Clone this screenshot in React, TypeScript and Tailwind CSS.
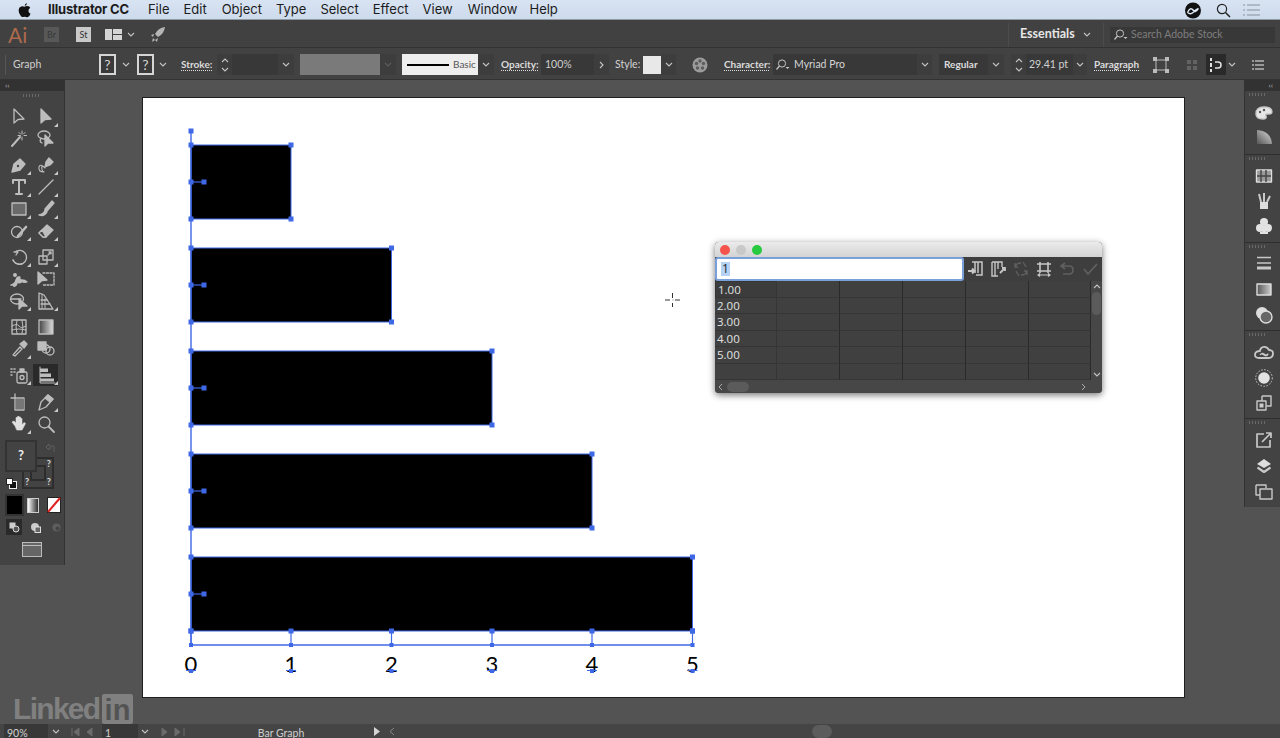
import React from "react";

const c = "#bdbdbd";
const Chev = ({ dim = false, up = false }: { dim?: boolean; up?: boolean }) => (
  <svg width="8" height="5" viewBox="0 0 8 5" className="shrink-0">
    <path d={up ? "M1 4 L4 1 L7 4" : "M1 1 L4 4 L7 1"} fill="none" stroke={dim ? "#5e5e5e" : "#c4c4c4"} strokeWidth="1.1" />
  </svg>
);

const ChevCell = ({ w = "w-[16px]", dim = false }: { w?: string; dim?: boolean }) => (
  <span className={`${w} h-[21px] flex items-center justify-center bg-[#3d3d3d]`}>
    <Chev dim={dim} />
  </span>
);

const Spin = () => (
  <span className="w-[15px] h-[21px] flex flex-col items-center justify-center gap-[4px] bg-[#3d3d3d]">
    <Chev up />
    <Chev />
  </span>
);

const Lens = () => (
  <svg width="15" height="12" viewBox="0 0 15 12" className="shrink-0">
    <circle cx="7" cy="4.5" r="3.6" fill="none" stroke="#c4c4c4" />
    <path d="M4.5 7 L1.5 10.5" stroke="#c4c4c4" strokeWidth="1.2" />
    <path d="M10.5 8 h4 l-2 2 z" fill="#c4c4c4" />
  </svg>
);

const Q = () => (
  <span className="w-[17px] h-[21px] border-2 border-[#d5d5d5] flex items-center justify-center text-[#d5d5d5] text-[14px] leading-none bg-[#3a3a3a]">?</span>
);

const Label = ({ children, className = "" }: { children: React.ReactNode; className?: string }) => (
  <span className={`text-[#dcdcdc] text-[10px] font-bold underline decoration-dotted underline-offset-2 ${className}`}>{children}</span>
);

function Tool({ children, corner = true, active = false }: { children?: React.ReactNode; corner?: boolean; active?: boolean }) {
  return (
    <div className={`relative w-[25px] h-[22px] flex items-center justify-center ${active ? "bg-[#2a2a2a]" : ""}`}>
      <svg width="20" height="20" viewBox="0 0 20 20" fill="none" stroke={c} strokeWidth="1.3" strokeLinejoin="round" strokeLinecap="round">
        {children}
      </svg>
      {corner && (
        <svg width="4" height="4" viewBox="0 0 4 4" className="absolute right-[0px] bottom-[1px]">
          <path d="M4 0 V4 H0 Z" fill="#c8c8c8" />
        </svg>
      )}
    </div>
  );
}

const Grip = () => (
  <div className="h-[5px] flex justify-center">
    <div className="w-[18px] h-[3px] bg-[repeating-linear-gradient(90deg,#6a6a6a_0_1px,transparent_1px_3px)]" />
  </div>
);

function Side({ children }: { children: React.ReactNode }) {
  return (
    <div className="w-[20px] h-[20px] flex items-center justify-center">
      <svg width="20" height="20" viewBox="0 0 20 20" fill="none" stroke="#c8c8c8" strokeWidth="1.4" strokeLinejoin="round">
        {children}
      </svg>
    </div>
  );
}

const Row = ({ children, cls = "" }: { children: React.ReactNode; cls?: string }) => (
  <div className={`flex gap-[2px] ${cls}`}>{children}</div>
);

function LeftTools() {
  return (
    <aside className="w-[64px] h-[485px] bg-[#434343] shrink-0 flex flex-col shadow-[1px_0_0_#333]">
      <div className="h-[11px] bg-[#323232] text-[#bbb] text-[8px] leading-[10px] pl-[5px]">‹‹</div>
      <div className="pt-[3px]"><Grip /></div>
      <div className="pl-[6px] pt-[7px] flex flex-col">
        <Row>
          <Tool corner={false}><path d="M5 2 V16 L9 12.5 L15 12 Z" /></Tool>
          <Tool><path d="M5 2 V16 L9 12.5 L15 12 Z" fill={c} /></Tool>
        </Row>
        <Row>
          <Tool corner={false}><path d="M3 17 L11 8" strokeWidth="2" /><path d="M13 2 v3 M13 8 v3 M9 6.5 h2.5 M15 6.5 h2.5 M10 3.5 l1.5 1.5 M16 3.5 l-1.5 1.5" strokeWidth="1" /></Tool>
          <Tool corner={false}><ellipse cx="8" cy="6" rx="6" ry="4" /><path d="M5 9 q-2 4 1 5" /><path d="M9 6 V17 L12 14 L17 14 Z" fill={c} /></Tool>
        </Row>
        <Row cls="mt-[4px]">
          <Tool><path d="M3 17 L5 9 L11 4 L16 9 L11 15 Z" fill={c} /><circle cx="9" cy="11" r="1.2" fill="#434343" stroke="none" /></Tool>
          <Tool><path d="M9 12 L10 7 L13 3 L17 7 L14 10 Z" fill={c} /><path d="M9 13 q-5 -5 -6 -1 q-1 5 5 5 q-3 -2 -2 -6" strokeWidth="1.1" /></Tool>
        </Row>
        <Row>
          <Tool><path d="M4 6 V3 H16 V6 M10 3 V17 M7 17 H13" strokeWidth="2" /></Tool>
          <Tool><path d="M3 17 L17 3" /></Tool>
        </Row>
        <Row>
          <Tool><rect x="3" y="4" width="14" height="12" fill="#6a6a6a" /></Tool>
          <Tool><path d="M16 2 L9 10 L11 12 L18 4 Z" fill={c} /><path d="M9 11 q-1 4 -6 5 q5 2 8 -3 Z" fill={c} /></Tool>
        </Row>
        <Row>
          <Tool><circle cx="8" cy="11" r="5.5" /><path d="M9 15 L17 6" strokeWidth="2.6" /></Tool>
          <Tool><path d="M3 12 L11 4 L17 9 L10 16 H7 Z" fill={c} /><path d="M3 12 L7 16 L10 16 L6 9 Z" fill="#434343" /></Tool>
        </Row>
        <Row cls="mt-[4px]">
          <Tool><path d="M5 5 H9 L7 8 M6 5 A7 7 0 1 1 4 13" /><path d="M4 13 a7 7 0 0 0 10 3" strokeDasharray="1.5 1.5" /></Tool>
          <Tool><rect x="7" y="3" width="10" height="10" /><rect x="3" y="9" width="8" height="8" /><path d="M12 8 L15 5 M13 5 h2 v2" /></Tool>
        </Row>
        <Row>
          <Tool corner={false}><path d="M2 16 q4 -1 5 -5 q1 -4 4 -3 q-1 3 2 3 q3 0 5 2 q-3 1 -5 -0.5 q-2 2 -5 1 q0 3 -3 4" fill={c} /><circle cx="6" cy="6" r="1.3" fill={c} /></Tool>
          <Tool corner={false}><path d="M7 4 H18 V16 H7" strokeDasharray="2 1.5" /><path d="M2 3 V15 L6 11.5 L11 11 Z" fill={c} /></Tool>
        </Row>
        <Row>
          <Tool><ellipse cx="8" cy="8" rx="6.5" ry="5" /><path d="M2 8 H12" /><path d="M10 8 V18 L13 15 L18 15 Z" fill={c} /></Tool>
          <Tool><path d="M3 2 V18 H17 L8 4 Z" /><path d="M5 9 H11 M5 13 H14" /><path d="M6 3 V17 M9 8 V17" strokeWidth="1" /></Tool>
        </Row>
        <Row cls="mt-[4px]">
          <Tool corner={false}><rect x="3" y="3" width="14" height="14" /><path d="M3 9 q5 -3 7 0 t7 0 M3 13 q6 -2 14 0 M8 3 q-2 7 0 14 M13 3 q2 7 0 14" strokeWidth="1" /></Tool>
          <Tool corner={false}><defs><linearGradient id="g1"><stop offset="0" stopColor="#444" /><stop offset="1" stopColor="#ddd" /></linearGradient></defs><rect x="3" y="3" width="14" height="14" fill="url(#g1)" /></Tool>
        </Row>
        <Row>
          <Tool><path d="M4 16 L11 8 L13 10 L6 17 Z" /><path d="M11 5 L15 2 L18 5 L15 9 Z" fill={c} /></Tool>
          <Tool corner={false}><rect x="2" y="3" width="8" height="8" fill={c} /><circle cx="10" cy="10" r="4" /><circle cx="14" cy="12" r="4" /></Tool>
        </Row>
        <Row cls="mt-[4px]">
          <Tool><rect x="8" y="7" width="10" height="11" rx="1.5" /><circle cx="13" cy="12.5" r="2" /><rect x="11" y="4" width="4" height="3" fill={c} /><path d="M2 4 h1 M5 4 h1 M2 7 h1 M5 7 h1 M2 10 h1" strokeWidth="1.6" /></Tool>
          <Tool active><path d="M4 2 V18 H19" strokeWidth="1" /><rect x="4" y="3.5" width="8" height="3.5" fill={c} stroke="none" /><rect x="4" y="8.5" width="11" height="3.5" fill={c} stroke="none" /><rect x="4" y="13.5" width="14" height="3" fill={c} stroke="none" /></Tool>
        </Row>
        <Row cls="mt-[5px]">
          <Tool corner={false}><path d="M2 6 H15 V18 H6 V2" /><rect x="7" y="7" width="8" height="10" fill="#777" stroke="none" /></Tool>
          <Tool><path d="M3 18 L5 10 L12 3 L17 7 L10 15 Z" /><path d="M12 3 L17 7 L14 10 L9 6 Z" fill={c} /></Tool>
        </Row>
        <Row>
          <Tool><path d="M6 12 L3 8 L5 7 L7 9 V3.5 h1.5 V8 V2.5 h1.5 V8 V3 h1.5 V8.5 V4.5 H13 V11 L15 8.5 L16.5 9.5 L13 16 H8 Z" fill="#e0e0e0" stroke="#e0e0e0" strokeWidth="0.6" /></Tool>
          <Tool corner={false}><circle cx="8.5" cy="8.5" r="5.5" /><path d="M12.5 12.5 L18 18" strokeWidth="1.8" /></Tool>
        </Row>
      </div>
      <div className="relative h-[52px] mt-[5px] ml-[5px]">
        <div className="absolute left-[17px] top-[17px] w-[32px] h-[32px] border-2 border-[#2d2d2d]">
          <div className="absolute left-[6px] top-[6px] w-[16px] h-[16px] border-2 border-[#2d2d2d]" />
          <span className="absolute right-[1px] top-[0px] text-[#ddd] text-[9px] font-bold leading-[10px]">?</span>
          <span className="absolute right-[1px] bottom-[0px] text-[#ddd] text-[9px] font-bold leading-[10px]">?</span>
          <span className="absolute left-[1px] bottom-[0px] text-[#ddd] text-[9px] font-bold leading-[10px]">?</span>
        </div>
        <div className="absolute left-0 top-0 w-[32px] h-[32px] bg-[#434343] border-2 border-[#333] flex items-center justify-center text-[#eee] text-[13px] font-bold">?</div>
        <svg width="12" height="12" viewBox="0 0 12 12" className="absolute left-[40px] top-[2px]"><path d="M1 5 L4 2 V4 H9 V10 M1 5 L4 8 V6 H7" fill="none" stroke="#5f5f5f" /></svg>
        <div className="absolute left-[1px] top-[38px] w-[11px] h-[11px]">
          <div className="absolute left-[3px] top-[3px] w-[8px] h-[8px] bg-[#111] border border-[#eee]" />
          <div className="absolute left-0 top-0 w-[7px] h-[7px] bg-white border border-[#222]" />
        </div>
      </div>
      <div className="flex items-center pl-[7px] pt-[4px] gap-[4px]">
        <div className="w-[15px] h-[18px] bg-black shadow-[0_0_0_2px_#333]" />
        <div className="ml-[1px] w-[12px] h-[15px] border border-[#ccc] bg-gradient-to-r from-white to-[#333]" />
        <svg width="14" height="16" viewBox="0 0 14 16" className="ml-[4px]"><rect x="0.5" y="0.5" width="13" height="15" fill="#fff" stroke="#222" /><path d="M1 15 L13 1" stroke="#e02020" strokeWidth="2" /></svg>
      </div>
      <div className="flex items-center pl-[6px] pt-[5px] gap-[5px]">
        <div className="w-[16px] h-[16px] bg-[#2a2a2a] flex items-center justify-center"><svg width="11" height="11" viewBox="0 0 11 11"><rect x="0.5" y="0.5" width="6" height="6" fill="#ccc" /><circle cx="7" cy="7" r="3" fill="#555" stroke="#ddd" /></svg></div>
        <div className="w-[16px] h-[16px] flex items-center justify-center"><svg width="11" height="11" viewBox="0 0 11 11"><circle cx="5" cy="5" r="4" fill="#ccc" /><rect x="5" y="5" width="5.5" height="5.5" fill="#666" stroke="#ddd" /></svg></div>
        <div className="w-[16px] h-[16px] flex items-center justify-center"><svg width="11" height="11" viewBox="0 0 11 11"><circle cx="5.5" cy="5.5" r="4" fill="#5e5e5e" /><circle cx="6.5" cy="6.5" r="2" fill="#434343" /></svg></div>
      </div>
      <div className="mt-[7px] ml-[22px] w-[20px] h-[15px] border border-[#bbb] bg-[#666] pt-[2px]"><div className="h-[1px] bg-[#bbb]" /></div>
    </aside>
  );
}

const Sep = () => <div className="h-[1px] bg-[#2e2e2e]" />;

function RightTools() {
  return (
    <aside className="w-[35px] h-[427px] bg-[#434343] shrink-0 shadow-[-1px_0_0_#333] flex flex-col pl-[9px]">
      <div className="-ml-[9px] h-[11px] bg-[#323232] text-[#bbb] text-[8px] leading-[10px] text-right pr-[7px]">‹‹</div>
      <div className="-ml-[9px] pt-[2px] pr-[9px]"><Grip /></div>
      <div className="pt-[5px] h-[56px] flex flex-col gap-[4px]">
        <Side><path d="M2 11 q0 -7 8 -7 q8 0 8 5 q0 2 -3 2 h-2 q-2 0 -1 2 q1 3 -3 3 q-7 0 -7 -5 Z" fill="#e6e6e6" /><circle cx="6" cy="9" r="1.2" fill="#555" stroke="none" /><circle cx="10" cy="7" r="1.2" fill="#555" stroke="none" /></Side>
        <Side><defs><linearGradient id="g2" x1="0" x2="1" y1="1" y2="0"><stop offset="0" stopColor="#555" /><stop offset="1" stopColor="#ddd" /></linearGradient></defs><path d="M3 3 Q17 4 18 17 H3 Z" fill="url(#g2)" stroke="none" /></Side>
      </div>
      <div className="-ml-[9px]"><Sep /><div className="pt-[2px] pr-[9px]"><Grip /></div></div>
      <div className="pt-[4px] h-[80px] flex flex-col gap-[5px]">
        <Side><rect x="2.5" y="4" width="15" height="12" fill="#999" stroke="#ddd" /><path d="M3 10 H17 M7 4 V16 M12 4 V16" stroke="#444" /></Side>
        <Side><path d="M6 11 H14 V18 H6 Z" fill="#ddd" stroke="none" /><path d="M7 11 L5 3 M10 11 V2 M13 11 L16 5" strokeWidth="2" /></Side>
        <Side><g fill="#e2e2e2" stroke="none"><circle cx="10" cy="6" r="4" /><circle cx="6" cy="12" r="4" /><circle cx="14" cy="12" r="4" /><path d="M9 10 H11 L12 16 H14 V18 H6 V16 H8 Z" /></g></Side>
      </div>
      <div className="-ml-[9px]"><Sep /><div className="pt-[2px] pr-[9px]"><Grip /></div></div>
      <div className="pt-[3px] h-[80px] flex flex-col gap-[6px]">
        <Side><path d="M3 4.5 H17 M3 10 H17" strokeWidth="1.6" /><path d="M3 15 H17" strokeWidth="3" /></Side>
        <Side><defs><linearGradient id="g3"><stop offset="0" stopColor="#555" /><stop offset="1" stopColor="#ccc" /></linearGradient></defs><rect x="3" y="5" width="14" height="11" fill="url(#g3)" stroke="#ddd" /></Side>
        <Side><circle cx="8" cy="8" r="6" fill="#ddd" stroke="none" /><circle cx="12" cy="12" r="6" fill="#666" stroke="#ddd" /></Side>
      </div>
      <div className="-ml-[9px]"><Sep /><div className="pt-[2px] pr-[9px]"><Grip /></div></div>
      <div className="pt-[5px] h-[80px] flex flex-col gap-[5px]">
        <Side><path d="M5 15 H14 Q19 15 19 10.5 Q19 7 15 7 Q13 3 9 4 Q6 5 6 8 Q1 8 1 11.5 Q1 15 5 15 Z" strokeWidth="1.8" /><path d="M6 12 q2 -3 4 -1 t4 0 q-1 3 -4 1 t-4 0" strokeWidth="1.1" /></Side>
        <Side><circle cx="10" cy="10" r="5.8" fill="#e2e2e2" stroke="none" /><circle cx="10" cy="10" r="8.3" strokeDasharray="1.5 1.5" strokeWidth="1" /></Side>
        <Side><path d="M8 3 H17 V13 H12 M8 3 V8" /><rect x="3" y="8" width="9" height="9" /><rect x="5.5" y="10.5" width="4" height="4" fill="#ccc" stroke="none" /></Side>
      </div>
      <div className="-ml-[9px]"><Sep /><div className="pt-[2px] pr-[9px]"><Grip /></div></div>
      <div className="pt-[4px] flex flex-col gap-[6px]">
        <Side><path d="M10 4 H3 V17 H16 V10" strokeWidth="1.7" /><path d="M8 12 L17 3 M12 3 H17 V8" strokeWidth="1.7" /></Side>
        <Side><path d="M10 3 L17 8 L10 12 L3 8 Z" fill="#ddd" stroke="none" /><path d="M3.5 11.5 L10 16 L16.5 11.5" strokeWidth="2.2" /></Side>
        <Side><path d="M2 3 H12 V6 M2 3 V13 H6" /><rect x="6" y="7" width="12" height="10" /></Side>
      </div>
    </aside>
  );
}

function DataWindow() {
  const rows = ["1.00", "2.00", "3.00", "4.00", "5.00", ""];
  const icon = "stroke-[#c6c6c6]";
  return (
    <div className="absolute left-[715px] top-[162px] w-[387px] h-[151px] bg-[#404040] rounded-[4px] overflow-hidden shadow-[0_2px_7px_rgba(0,0,0,0.55)]">
      <div className="h-[15px] bg-gradient-to-b from-[#ebebeb] to-[#d3d3d3] flex items-center pl-[5px] gap-[6px]">
        <span className="w-[10px] h-[10px] rounded-full bg-[#f4544c]" />
        <span className="w-[10px] h-[10px] rounded-full bg-[#c8c8c8]" />
        <span className="w-[10px] h-[10px] rounded-full bg-[#27c93f]" />
      </div>
      <div className="h-[24px] flex items-center bg-[#3e3e3e]">
        <div className="w-[249px] h-[24px] bg-white border-2 border-[#7aa0dc] rounded-[3px] flex items-center pl-[4px]">
          <span className="bg-[#b4d2f4] text-[#222] text-[12px] leading-[14px] px-[1px] font-['Open_Sans',sans-serif]">1</span>
        </div>
        <div className="flex pl-[1px] gap-[3px]">
          <svg width="20" height="20" viewBox="0 0 20 20" fill="none" className={icon}><path d="M7 3 H17 V16 H11 M10 3 V14 M13 3 V14" strokeWidth="1.5" /><path d="M3 12 H9 M7 9.5 L9.5 12 L7 14.5" strokeWidth="2" /></svg>
          <svg width="20" height="20" viewBox="0 0 20 20" fill="none" className={icon}><path d="M4 3 H14 V8 M4 3 V17 H10 M7 3 V17 M10 3 V10" strokeWidth="1.4" /><path d="M12 14 L17 9 M14 9 H17 V12" strokeWidth="1.8" /></svg>
          <svg width="20" height="20" viewBox="0 0 20 20" fill="none" className="stroke-[#606060]"><path d="M4 8 Q5 4 10 4 M4 4 V8 H7 M16 12 Q15 16 10 16 M16 16 V12 H13 M5 12 l3 5 M12 3 l3 5" strokeWidth="1.3" /></svg>
          <svg width="20" height="20" viewBox="0 0 20 20" fill="none" className={icon}><path d="M3 5 H17 M3 12 H17 M6 3 V14 M14 3 V14" strokeWidth="1.6" /><path d="M4 16 H16 M6 14.5 L4 16 L6 17.5 M14 14.5 L16 16 L14 17.5" strokeWidth="1.2" /></svg>
          <svg width="20" height="20" viewBox="0 0 20 20" fill="none" className="stroke-[#606060]"><path d="M8 4 L4 7 L8 10 M4 7 H12 Q16 7 16 11 Q16 15 12 15 H6" strokeWidth="1.6" /></svg>
          <svg width="20" height="20" viewBox="0 0 20 20" fill="none" className="stroke-[#606060]"><path d="M4 10 L8 15 L17 5" strokeWidth="1.7" /></svg>
        </div>
      </div>
      <div className="flex">
        <div className="w-[376px] grid grid-cols-[62px_63px_63px_63px_63px_62px] auto-rows-[16.5px]">
          {rows.map((r, i) => (
            <React.Fragment key={i}>
              <div className={`border-b border-r border-[#353535] pl-[2px] text-[#e2e2e2] text-[11.5px] leading-[15px] font-['Open_Sans',sans-serif] ${i === 0 ? "border border-[#222] bg-[#3c3c3c]" : ""}`}>{r}</div>
              {[0, 1, 2, 3, 4].map((k) => (
                <div key={k} className="border-b border-[#363636] border-r border-r-[#2a2a2a]" />
              ))}
            </React.Fragment>
          ))}
        </div>
        <div className="w-[11px] h-[99px] bg-[#474747] flex flex-col items-center pt-[3px] relative">
          <Chev up />
          <div className="w-[9px] h-[23px] mt-[3px] rounded-full bg-[#5b5b5b]" />
          <div className="absolute bottom-[3px]"><Chev /></div>
        </div>
      </div>
      <div className="h-[13px] bg-[#474747] flex items-center pl-[3px] text-[#999] text-[10px] relative">
        <svg width="5" height="8" viewBox="0 0 5 8"><path d="M4 1 L1 4 L4 7" fill="none" stroke="#aaa" /></svg>
        <div className="ml-[4px] w-[22px] h-[10px] rounded-full bg-[#5b5b5b]" />
        <svg width="5" height="8" viewBox="0 0 5 8" className="absolute right-[16px]"><path d="M1 1 L4 4 L1 7" fill="none" stroke="#aaa" /></svg>
      </div>
    </div>
  );
}

function Graph() {
  const blue = "#3f68e6";
  const xs = [191, 291, 391.5, 492, 592, 692.5];
  const tops = [145, 248, 351, 454, 557];
  const Sq = ({ x, y, s = 5 }: { x: number; y: number; s?: number }) => <rect x={x - s / 2} y={y - s / 2} width={s} height={s} fill={blue} />;
  return (
    <svg viewBox="143 98 1041 599" width="1041" height="599" className="block">
      {tops.map((t, i) => (
        <g key={t}>
          <rect x={191} y={t} width={xs[i + 1] - 191} height={74} fill="#000" stroke={blue} strokeWidth="1" />
          <path d={`M191 ${t + 37} H204`} stroke={blue} strokeWidth="1.2" />
          <Sq x={191} y={t} /><Sq x={xs[i + 1]} y={t} /><Sq x={191} y={t + 74} /><Sq x={xs[i + 1]} y={t + 74} />
          <Sq x={191} y={t + 37} /><Sq x={204} y={t + 37} />
        </g>
      ))}
      <path d="M191 131 V645 H692.5" fill="none" stroke={blue} strokeWidth="1.4" />
      <Sq x={191} y={131} />
      {xs.map((x, i) => (
        <g key={x}>
          <path d={`M${x} 631 V645`} stroke={blue} strokeWidth="1.2" />
          <Sq x={x} y={631} /><Sq x={x} y={645} s={4} />
          <text x={x} y={671.5} textAnchor="middle" fontSize="22" fill="#000" fontFamily="'Lato', sans-serif">{i}</text>
          <path d={`M${x - 5} 670.5 H${x + 5}`} stroke={blue} strokeWidth="1" />
          <Sq x={x} y={671} s={4} />
        </g>
      ))}
      <path d="M665 300 H670 M675 300 H680 M672.5 293 V298 M672.5 303 V307" stroke="#333" strokeWidth="1" />
      <path d="M672.5 300 h1" stroke="#777" />
    </svg>
  );
}

export default function App() {
  const menu = ["File", "Edit", "Object", "Type", "Select", "Effect", "View", "Window", "Help"];
  const menuCls = ["ml-[19px]", "ml-[14px]", "ml-[15px]", "ml-[14px]", "ml-[14px]", "ml-[14px]", "ml-[14px]", "ml-[15px]", "ml-[12px]"];
  return (
    <div className="w-[1280px] h-[738px] overflow-hidden flex flex-col bg-[#535353] font-['Lato',sans-serif]">
      <header className="h-[20px] shrink-0 bg-gradient-to-b from-[#d8e3f2] to-[#cddbec] border-b border-[#8f9aa5] flex items-center text-[#1c1c1c] text-[13px] font-['Inter',sans-serif] pl-[18px] pt-[1px]">
        <svg width="13" height="16" viewBox="0 0 13 16" className="shrink-0"><path d="M9 1 Q9 3.5 6.7 4 Q6.5 1.8 9 1 Z M6.5 4.8 Q8.5 3.5 10.5 4.3 Q11.7 4.8 12.2 5.7 Q10 7.2 10.5 9.5 Q10.8 11 12.5 11.7 Q11.5 14.5 10 15 Q9 15.4 8 14.9 Q6.6 14.4 5.3 14.9 Q4 15.4 3 14.3 Q0.5 11.5 0.6 8.3 Q0.7 5.3 3.2 4.5 Q4.8 4.1 6.5 4.8 Z" fill="#111" /></svg>
        <span className="ml-[17px] font-bold tracking-[-0.2px]">Illustrator CC</span>
        {menu.map((m, i) => (
          <span key={m} className={menuCls[i]}>{m}</span>
        ))}
        <div className="ml-auto flex items-center pr-[20px]">
          <svg width="18" height="17" viewBox="0 0 18 17"><circle cx="9" cy="8.5" r="8" fill="#111" /><path d="M3.5 10.5 q3 -6 5.5 -2.5 t5.5 -1.5 M3.5 10.5 q3 2.5 5.5 0 t5.5 -4" fill="none" stroke="#dfe8f3" strokeWidth="1.4" /></svg>
          <svg width="15" height="15" viewBox="0 0 15 15" className="ml-[14px]"><circle cx="6" cy="6" r="4.6" fill="none" stroke="#222" strokeWidth="1.2" /><path d="M9.5 9.5 L14 14" stroke="#222" strokeWidth="1.5" /></svg>
          <svg width="17" height="12" viewBox="0 0 17 12" className="ml-[12px]"><path d="M0 1 H2 M4 1 H17 M0 6 H2 M4 6 H17 M0 11 H2 M4 11 H17" stroke="#87919c" strokeWidth="1.1" /></svg>
        </div>
      </header>

      <div className="h-[28px] shrink-0 bg-[#414141] border-b border-[#323232] flex items-center pl-[8px] pt-[2px]">
        <span className="w-[36px] text-[#ad6a4c] text-[21px] leading-none font-['Lato',sans-serif]">Ai</span>
        <span className="w-[15px] h-[15px] bg-[#585858] text-[#383838] text-[9px] leading-[15px] text-center">Br</span>
        <span className="ml-[17px] w-[15px] h-[15px] bg-[#c9c9c9] text-[#333] text-[9px] leading-[15px] text-center">St</span>
        <svg width="17" height="11" viewBox="0 0 17 11" className="ml-[14px]"><rect x="0" y="0" width="7" height="11" fill="#d5d5d5" /><rect x="8" y="0" width="9" height="5" fill="#d5d5d5" /><rect x="8" y="6" width="9" height="5" fill="#d5d5d5" /></svg>
        <span className="ml-[5px]"><Chev /></span>
        <svg width="16" height="18" viewBox="0 0 16 18" className="ml-[15px]"><path d="M15 1 Q8 2 5 8 L8 11 Q14 8 15 1 Z M4 8 L1 9 L3 11 Z M8 12 L7 16 L5 14 Z M3 12 L5 14 L2 16 Z" fill="#b5b5b5" /></svg>
        <div className="ml-auto flex items-center h-full">
          <div className="w-[1px] h-[24px] bg-[#4c4c4c]" />
          <span className="ml-[11px] w-[55px] text-[#e6e6e6] text-[12.5px] font-bold leading-none">Essentials</span>
          <span className="ml-[8px]"><Chev /></span>
          <div className="ml-[12px] w-[1px] h-[24px] bg-[#4c4c4c]" />
          <div className="ml-[6px] mr-[5px] w-[165px] h-[16px] bg-[#383838] rounded-[1px] flex items-center pl-[3px] text-[#7e7e7e] text-[10.5px]">
            <Lens /><span className="ml-[3px]">Search Adobe Stock</span>
          </div>
        </div>
      </div>

      <div className="h-[32px] shrink-0 bg-[#424242] border-b border-[#333] flex items-center pl-[5px] pt-[2px] text-[#d2d2d2] text-[10.5px] relative">
        <div className="w-[1px] h-[20px] bg-[#565656]" />
        <span className="ml-[7px] w-[86px] text-[#cfcfcf]">Graph</span>
        <Q /><span className="w-[21px] flex justify-center pr-[1px]"><Chev /></span>
        <Q /><span className="w-[27px] flex justify-center pr-[9px]"><Chev /></span>
        <Label className="w-[36px]">Stroke:</Label>
        <Spin />
        <span className="w-[46px] h-[21px] bg-[#383838]" />
        <ChevCell />
        <span className="ml-[6px] w-[80px] h-[21px] bg-[#7a7a7a]" />
        <ChevCell dim />
        <span className="ml-[6px] w-[76px] h-[21px] bg-[#eeeeee] flex items-center pl-[5px] text-[#555] text-[10px]">
          <span className="w-[42px] h-[2px] bg-black mr-[4px]" />Basic
        </span>
        <ChevCell />
        <Label className="ml-[7px] w-[40px]">Opacity:</Label>
        <span className="w-[53px] h-[21px] bg-[#383838] pl-[4px] leading-[21px] text-[#cfcfcf]">100%</span>
        <span className="w-[15px] h-[21px] bg-[#3d3d3d] flex items-center justify-center">
          <svg width="5" height="8" viewBox="0 0 5 8"><path d="M1 1 L4 4 L1 7" fill="none" stroke="#c4c4c4" strokeWidth="1.1" /></svg>
        </span>
        <span className="ml-[6px] w-[28px]">Style:</span>
        <span className="w-[18px] h-[18px] bg-[#e8e8e8]" />
        <ChevCell w="w-[15px]" />
        <svg width="16" height="16" viewBox="0 0 16 16" className="ml-[16px]"><circle cx="8" cy="8" r="7.5" fill="#9c9c9c" /><g fill="#5c5c5c"><circle cx="8" cy="4" r="1.7" /><circle cx="4.5" cy="6.5" r="1.7" /><circle cx="11.5" cy="6.5" r="1.7" /><circle cx="5.5" cy="11" r="1.7" /><circle cx="10.5" cy="11" r="1.7" /></g></svg>
        <Label className="ml-[16px] w-[49px]">Character:</Label>
        <span className="w-[144px] h-[21px] bg-[#383838] flex items-center pl-[2px]">
          <Lens /><span className="ml-[4px] text-[#d5d5d5]">Myriad Pro</span>
        </span>
        <ChevCell w="w-[15px]" />
        <span className="ml-[7px] w-[49px] h-[21px] bg-[#383838] pl-[5px] leading-[21px] font-bold text-[10px] text-[#dcdcdc]">Regular</span>
        <ChevCell />
        <span className="ml-[7px]"><Spin /></span>
        <span className="w-[47px] h-[21px] bg-[#383838] pl-[3px] leading-[21px]">29.41 pt</span>
        <ChevCell w="w-[14px]" />
        <Label className="ml-[7px] w-[59px]">Paragraph</Label>
        <svg width="16" height="16" viewBox="0 0 16 16"><g fill="#bbb"><rect x="0" y="0" width="4" height="4" /><rect x="12" y="0" width="4" height="4" /><rect x="0" y="12" width="4" height="4" /><rect x="12" y="12" width="4" height="4" /></g><rect x="3" y="3" width="10" height="10" fill="none" stroke="#bbb" /></svg>
        <svg width="10" height="10" viewBox="0 0 10 10" className="ml-[18px]"><g fill="#636363"><rect x="0" y="0" width="4" height="4" /><rect x="6" y="0" width="4" height="4" /><rect x="0" y="6" width="4" height="4" /><rect x="6" y="6" width="4" height="4" /></g></svg>
        <span className="ml-[9px] w-[20px] h-[21px] bg-[#2a2a2a] flex items-center justify-center">
          <svg width="14" height="14" viewBox="0 0 14 14"><path d="M2 0 V3 M2 5 V9 M2 11 V14" stroke="#e2e2e2" strokeWidth="2" /><path d="M6 4 H9 Q12 4 12 7 Q12 10 9 10 H6" fill="none" stroke="#e2e2e2" strokeWidth="1.5" /></svg>
        </span>
        <span className="ml-[2px] w-[10px]"><Chev /></span>
        <svg width="12" height="10" viewBox="0 0 12 10" className="ml-[14px]"><path d="M0 1 H2 M3 1 H12 M0 5 H2 M3 5 H12 M0 9 H2 M3 9 H12" stroke="#b5b5b5" strokeWidth="1.3" /></svg>
      </div>

      <main className="relative flex-1 flex items-start min-h-0">
        <LeftTools />
        <div className="flex-1 min-w-0 pl-[79px] pt-[18px]">
          <div className="w-[1041px] h-[599px] bg-white shadow-[0_0_0_1px_#1f1f1f]">
            <Graph />
          </div>
        </div>
        <RightTools />
        <DataWindow />
        <div className="absolute left-[13px] bottom-[0px] h-[30px] flex items-center font-['Liberation_Sans',sans-serif] text-[#808080]">
          <span className="w-[88px] text-[30px] leading-[30px] font-bold tracking-[-1.7px]">Linked</span>
          <span className="ml-[1px] w-[31px] h-[30px] bg-[#808080] rounded-[2px] text-[#535353] text-[29px] leading-[32px] font-bold text-center">in</span>
        </div>
      </main>

      <footer className="h-[14px] shrink-0 bg-[#454545] flex items-start text-[#d2d2d2] text-[10.5px] leading-[10px] overflow-hidden pl-[4px]">
        <span className="w-[44px] h-[14px] bg-[#383838] pl-[3px] pt-[4px]">90%</span>
        <span className="w-[16px] h-[14px] flex items-center justify-center"><Chev /></span>
        <svg width="26" height="14" viewBox="0 0 26 14" className="ml-[7px]"><path d="M1 4 V12 M8 4 L3 8 L8 12 Z M21 4 L16 8 L21 12 Z" fill="#6b6b6b" stroke="#6b6b6b" /></svg>
        <span className="ml-[5px] w-[36px] h-[14px] bg-[#383838] pl-[3px] pt-[4px]">1</span>
        <span className="w-[14px] h-[14px] flex items-center justify-center"><Chev /></span>
        <svg width="26" height="14" viewBox="0 0 26 14" className="ml-[8px]"><path d="M2 4 L7 8 L2 12 Z M15 4 L20 8 L15 12 Z M24 4 V12" fill="#6b6b6b" stroke="#6b6b6b" /></svg>
        <span className="ml-[5px] w-[180px] pt-[4px] text-center text-[#cfcfcf]">Bar Graph</span>
        <svg width="8" height="14" viewBox="0 0 8 14" className="ml-[2px]"><path d="M1 3 L7 7.5 L1 12 Z" fill="#d5d5d5" /></svg>
        <svg width="6" height="14" viewBox="0 0 6 14" className="ml-[8px]"><path d="M5 4 L1 7.5 L5 11" fill="none" stroke="#888" /></svg>
        <div className="ml-[417px] mt-[1px] w-[20px] h-[13px] rounded-full bg-[#5c5c5c]" />
      </footer>
    </div>
  );
}
